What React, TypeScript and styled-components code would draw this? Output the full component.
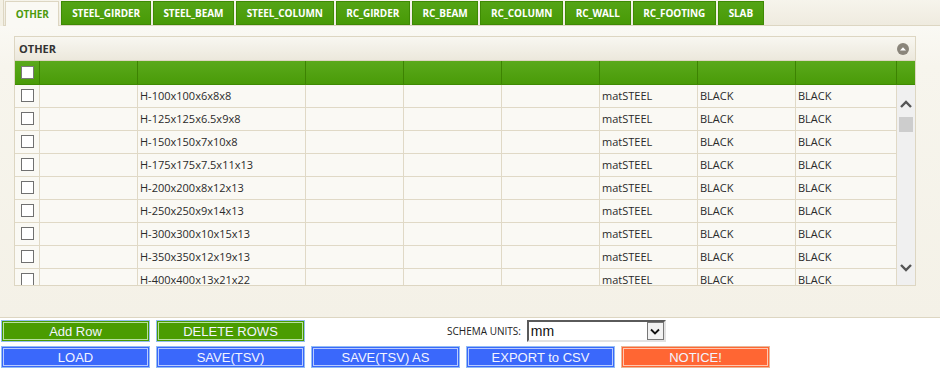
import { createGlobalStyle } from 'styled-components';
import styled from 'styled-components';

const GlobalStyle = createGlobalStyle`
    html, body {
        margin: 0;
        padding: 0;
        background: #ffffff;
        font-family: 'Open Sans', 'DejaVu Sans', sans-serif;
    }
`;

const TABS = [
    'OTHER',
    'STEEL_GIRDER',
    'STEEL_BEAM',
    'STEEL_COLUMN',
    'RC_GIRDER',
    'RC_BEAM',
    'RC_COLUMN',
    'RC_WALL',
    'RC_FOOTING',
    'SLAB',
];

const SECTIONS = [
    'H-100x100x6x8x8',
    'H-125x125x6.5x9x8',
    'H-150x150x7x10x8',
    'H-175x175x7.5x11x13',
    'H-200x200x8x12x13',
    'H-250x250x9x14x13',
    'H-300x300x10x15x13',
    'H-350x350x12x19x13',
    'H-400x400x13x21x22',
];

// column widths in px, checkbox column first
const COLS = [25, 98, 168, 98, 98, 98, 98, 98, 101];

const App: React.FC = () => {
    return (
        <>
            <GlobalStyle />
            <Widget>
                <TabBar>
                    {TABS.map((tab, i) => (
                        <Tab key={tab} isActive={i === 0}>
                            {tab}
                        </Tab>
                    ))}
                </TabBar>
                <TabContent>
                    <Panel>
                        <PanelHeader>
                            <PanelTitle>OTHER</PanelTitle>
                            <CollapseIcon>
                                <svg width="12" height="12" viewBox="0 0 12 12">
                                    <circle cx="6" cy="6" r="6" fill="#8a857a" />
                                    <path d="M3 7.5 L6 4.3 L9 7.5 Z" fill="#ffffff" />
                                </svg>
                            </CollapseIcon>
                        </PanelHeader>
                        <HeadRow>
                            {COLS.map((w, i) => (
                                <HeadCell key={i} style={{ width: w }}>
                                    {i === 0 && <CheckBox isHeader />}
                                </HeadCell>
                            ))}
                            <HeadScrollCell />
                        </HeadRow>
                        <BodyWrap>
                            <Rows>
                                {SECTIONS.map((name) => (
                                    <Row key={name}>
                                        {COLS.map((w, i) => (
                                            <Cell key={i} style={{ width: w }}>
                                                {i === 0 && <CheckBox />}
                                                {i === 2 && name}
                                                {i === 6 && 'matSTEEL'}
                                                {(i === 7 || i === 8) && 'BLACK'}
                                            </Cell>
                                        ))}
                                    </Row>
                                ))}
                            </Rows>
                            <ScrollBar>
                                <ScrollArrow>
                                    <svg width="12" height="8" viewBox="0 0 12 8">
                                        <path d="M1 7 L6 2 L11 7" stroke="#555" strokeWidth="2.4" fill="none" />
                                    </svg>
                                </ScrollArrow>
                                <ScrollThumb />
                                <ScrollSpacer />
                                <ScrollArrow>
                                    <svg width="12" height="8" viewBox="0 0 12 8">
                                        <path d="M1 1 L6 6 L11 1" stroke="#555" strokeWidth="2.4" fill="none" />
                                    </svg>
                                </ScrollArrow>
                            </ScrollBar>
                        </BodyWrap>
                    </Panel>
                </TabContent>
            </Widget>
            <Controls>
                <ButtonRow>
                    <ActionButton tone="green">Add Row</ActionButton>
                    <ActionButton tone="green">DELETE ROWS</ActionButton>
                    <UnitsGroup>
                        <UnitsLabel>SCHEMA UNITS:</UnitsLabel>
                        <FakeSelect>
                            <SelectValue>mm</SelectValue>
                            <SelectArrow>
                                <svg width="10" height="7" viewBox="0 0 10 7">
                                    <path d="M1 1.5 L5 5.5 L9 1.5" stroke="#111" strokeWidth="1.8" fill="none" />
                                </svg>
                            </SelectArrow>
                        </FakeSelect>
                    </UnitsGroup>
                </ButtonRow>
                <ButtonRow>
                    <ActionButton tone="blue">LOAD</ActionButton>
                    <ActionButton tone="blue">SAVE(TSV)</ActionButton>
                    <ActionButton tone="blue">SAVE(TSV) AS</ActionButton>
                    <ActionButton tone="blue">EXPORT to CSV</ActionButton>
                    <ActionButton tone="orange">NOTICE!</ActionButton>
                </ButtonRow>
            </Controls>
        </>
    );
};

const Widget = styled.div`
    display: flex;
    flex-direction: column;
    height: 318px;
    box-sizing: border-box;
    background: linear-gradient(to right, #f3f0e4 0px, #f7f5ec 14px, #f5f2e8 100%);
    border-bottom: 1px solid #ddd6c2;
`;

const TabBar = styled.div`
    display: flex;
    align-items: flex-end;
    gap: 2px;
    height: 26px;
    box-sizing: border-box;
    margin-left: 3px;
    padding-left: 1px;
    background: linear-gradient(to bottom, #f6f4ec, #efebdf);
    border: 1px solid #ddd6c2;
    border-top: none;
    border-right: none;
`;

const Tab = styled.div<{ isActive: boolean }>`
    height: ${(props) => (props.isActive ? 25 : 24)}px;
    margin-bottom: ${(props) => (props.isActive ? -1 : 0)}px;
    box-sizing: border-box;
    padding: 0 9.7px;
    display: flex;
    align-items: center;
    font-size: 10px;
    font-weight: 700;
    letter-spacing: -0.1px;
    color: ${(props) => (props.isActive ? '#4c9a0c' : '#ffffff')};
    background: ${(props) => (props.isActive ? '#faf9f4' : 'linear-gradient(to bottom, #54a416, #489a06)')};
    border: 1px solid ${(props) => (props.isActive ? '#ddd6c2' : '#3e8a04')};
    border-bottom: ${(props) => (props.isActive ? 'none' : '1px solid #3e8a04')};
`;

const TabContent = styled.div`
    flex: 1;
    padding: 10px 24px 0 14px;
    background: linear-gradient(to bottom, #faf9f4 0px, #f7f5ed 40px, #f4f1e7 100%);
`;

const Panel = styled.div`
    display: flex;
    flex-direction: column;
    border: 1px solid #ddd6c2;
    background: #faf9f4;
`;

const PanelHeader = styled.div`
    display: flex;
    align-items: center;
    justify-content: space-between;
    height: 23px;
    padding: 0 6px 0 4px;
    background: linear-gradient(to bottom, #f8f7f1, #ece8dc);
    border-bottom: 1px solid #ddd6c2;
`;

const PanelTitle = styled.span`
    font-size: 11px;
    font-weight: 700;
    color: #333333;
`;

const CollapseIcon = styled.span`
    display: flex;
    width: 12px;
    height: 12px;
`;

const HeadRow = styled.div`
    display: flex;
    height: 23px;
    background: linear-gradient(to bottom, #5aa91c, #4a9b08);
    border-bottom: 1px solid #3f8a02;
`;

const HeadCell = styled.div`
    display: flex;
    align-items: center;
    box-sizing: border-box;
    padding-left: 6px;
    border-right: 1px solid #3d8302;
    flex-shrink: 0;
`;

const HeadScrollCell = styled.div`
    flex: 1;
`;

const BodyWrap = styled.div`
    display: flex;
    height: 200px;
    overflow: hidden;
`;

const Rows = styled.div`
    display: flex;
    flex-direction: column;
`;

const Row = styled.div`
    display: flex;
    height: 23px;
    flex-shrink: 0;
    box-sizing: border-box;
    border-bottom: 1px solid #e0d9c6;
`;

const Cell = styled.div`
    display: flex;
    align-items: center;
    flex-shrink: 0;
    box-sizing: border-box;
    padding: 0 0 1px 2px;
    border-right: 1px solid #e0d9c6;
    font-size: 11px;
    color: #2a2a2a;
    white-space: nowrap;
    &:first-child {
        padding-left: 6px;
    }
`;

const CheckBox = styled.span<{ isHeader?: boolean }>`
    display: block;
    width: 13px;
    height: 13px;
    box-sizing: border-box;
    background: #ffffff;
    border: 1px solid ${(props) => (props.isHeader ? '#7a7a7a' : '#707070')};
`;

const ScrollBar = styled.div`
    flex: 1;
    display: flex;
    flex-direction: column;
    align-items: center;
    background: #f0f0f0;
    padding: 14px 2px 12px;
`;

const ScrollArrow = styled.span`
    display: flex;
    height: 10px;
    align-items: center;
`;

const ScrollThumb = styled.div`
    align-self: stretch;
    height: 15px;
    margin-top: 8px;
    background: #cdcdcd;
`;

const ScrollSpacer = styled.div`
    flex: 1;
`;

const Controls = styled.div`
    display: flex;
    flex-direction: column;
    gap: 4px;
    padding: 2px 1px 0;
`;

const ButtonRow = styled.div`
    display: flex;
    align-items: center;
    gap: 6px;
`;

const TONES = {
    green: { bg: '#4a9c00', ring: '#b8e0a0' },
    blue: { bg: '#3a68fb', ring: '#b8ccff' },
    orange: { bg: '#ff6633', ring: '#ffc8b0' },
};

const ActionButton = styled.button<{ tone: keyof typeof TONES }>`
    width: 149px;
    height: 22px;
    padding: 0;
    box-sizing: border-box;
    font-family: 'Liberation Sans', Arial, sans-serif;
    font-size: 13px;
    color: #f2f4ff;
    background: ${(props) => TONES[props.tone].bg};
    border: 1px solid ${(props) => (props.tone === 'orange' ? '#e8b898' : '#93bdf2')};
    box-shadow: inset 0 0 0 1px ${(props) => TONES[props.tone].bg},
        inset 0 0 0 2px ${(props) => TONES[props.tone].ring};
    cursor: pointer;
`;

const UnitsGroup = styled.div`
    display: flex;
    align-items: center;
    margin-left: 136px;
    gap: 6px;
`;

const UnitsLabel = styled.span`
    font-size: 10px;
    color: #222222;
`;

const FakeSelect = styled.div`
    display: flex;
    align-items: center;
    width: 139px;
    height: 22px;
    box-sizing: border-box;
    background: #ffffff;
    border-top: 2px solid #5a5a5a;
    border-left: 2px solid #5a5a5a;
    border-right: 2px solid #e2e2e2;
    border-bottom: 2px solid #e2e2e2;
`;

const SelectValue = styled.span`
    flex: 1;
    padding-left: 2px;
    font-family: 'Liberation Sans', Arial, sans-serif;
    font-size: 14px;
    color: #111111;
`;

const SelectArrow = styled.span`
    display: flex;
    align-items: center;
    justify-content: center;
    width: 17px;
    height: 18px;
    box-sizing: border-box;
    background: #f2f2f2;
    border: 1px solid #777777;
`;

export default App;
